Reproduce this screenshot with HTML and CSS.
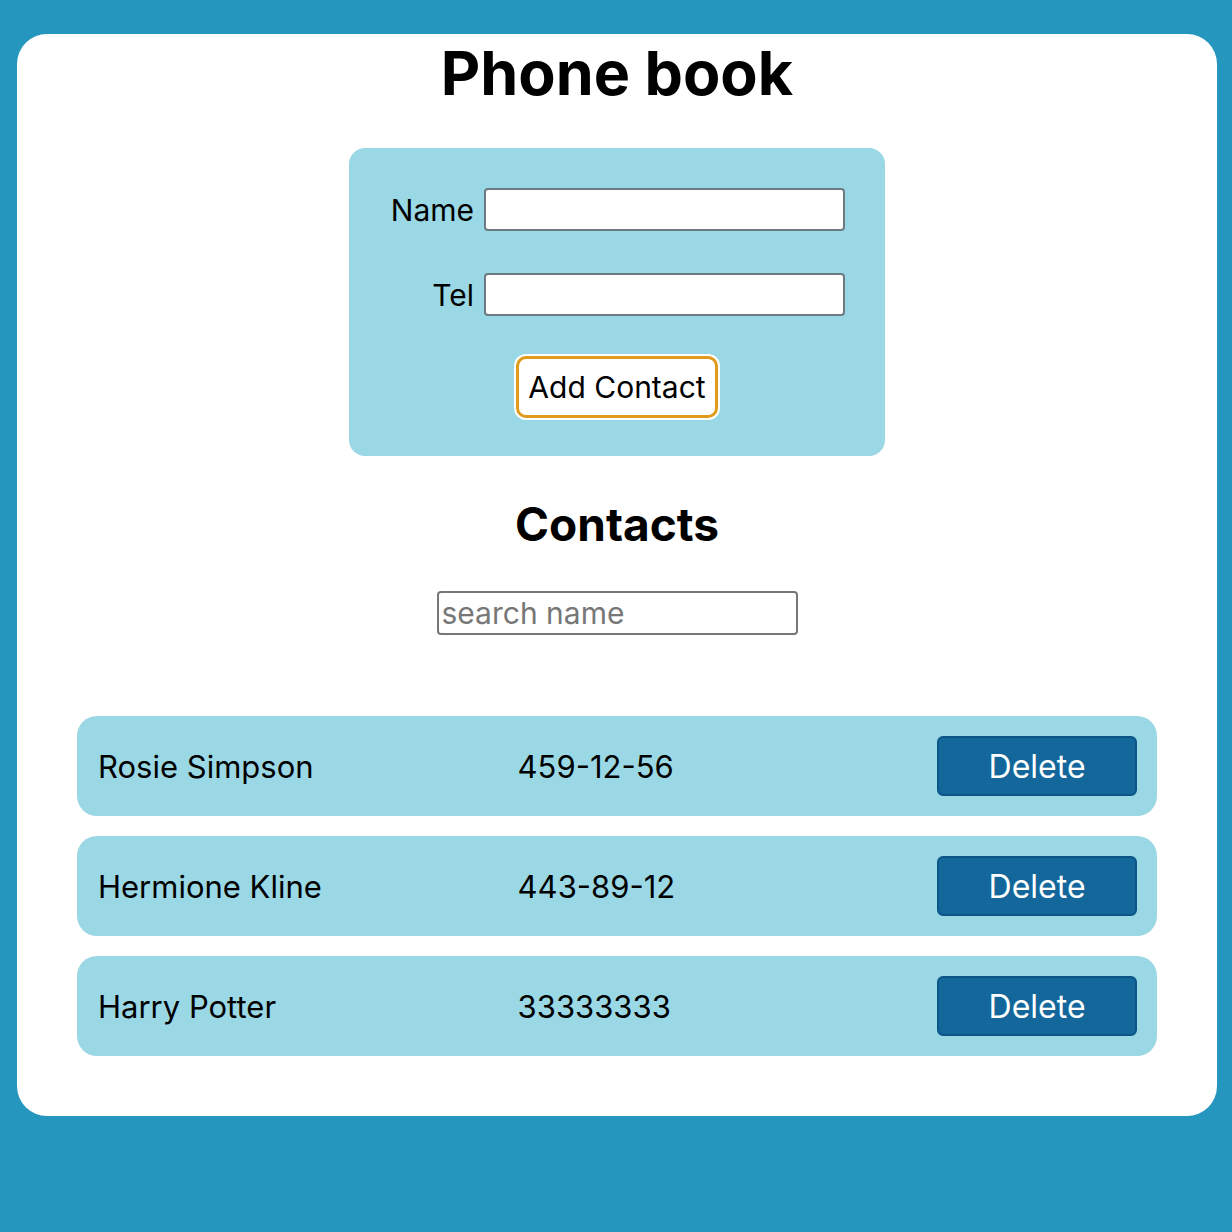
FILE: index.html
```html
<!DOCTYPE html>
<html lang="en">
<head>
<meta charset="utf-8">
<title>Phone book</title>
<link rel="stylesheet" href="styles.css">
</head>
<body>
  <main class="card">
    <h1 class="title">Phone book</h1>
    <form class="form">
      <label class="field">
        <span class="field-label">Name</span>
        <input class="field-input" type="text">
      </label>
      <label class="field">
        <span class="field-label">Tel</span>
        <input class="field-input" type="tel">
      </label>
      <button type="button" class="add-btn">Add Contact</button>
    </form>
    <h2 class="subtitle">Contacts</h2>
    <input class="search" type="text" placeholder="search name">
    <ul class="list">
      <li class="row">
        <span class="row-name">Rosie Simpson</span>
        <span class="row-tel">459-12-56</span>
        <button type="button" class="del-btn">Delete</button>
      </li>
      <li class="row">
        <span class="row-name">Hermione Kline</span>
        <span class="row-tel">443-89-12</span>
        <button type="button" class="del-btn">Delete</button>
      </li>
      <li class="row">
        <span class="row-name">Harry Potter</span>
        <span class="row-tel">33333333</span>
        <button type="button" class="del-btn">Delete</button>
      </li>
    </ul>
  </main>
</body>
</html>
```

FILE: styles.css
```css
* { box-sizing: border-box; }

html, body {
  margin: 0;
  background: #2596be;
}

body {
  padding: 34px 15px 0 17px;
  height: 1232px;
  font-family: Inter, "Noto Sans", sans-serif;
  font-size: 32px;
  color: #000;
}

.card {
  width: 1200px;
  height: 1082px;
  background: #fff;
  border-radius: 30px;
  padding: 0 60px 60px;
  display: flex;
  flex-direction: column;
  align-items: center;
}

.title {
  margin: 0;
  font-size: 61px;
  font-weight: 700;
  line-height: 78px;
}

.form {
  margin-top: 36px;
  width: 536px;
  height: 310px;
  background: #9ad8e5;
  border-radius: 16px;
  padding: 40px 40px 0 0;
  display: flex;
  flex-direction: column;
  align-items: center;
}

.field {
  display: flex;
  align-items: center;
  justify-content: flex-end;
  align-self: stretch;
  gap: 10px;
  margin-bottom: 42px;
}

.field-label {
  font-size: 30px;
}

.field-input {
  width: 361px;
  height: 43px;
  border: 2px solid #6f7a80;
  border-radius: 4px;
  background: #fff;
  font: inherit;
  padding: 2px 6px;
}

.add-btn {
  margin-left: 40px;
  margin-top: -2px;
  height: 62px;
  padding: 0 9px;
  font-family: Inter, "Noto Sans", sans-serif;
  font-size: 30px;
  color: #000;
  background: #fff;
  border: 3px solid #e09a1c;
  border-radius: 10px;
  box-shadow: 0 0 0 2px #fff;
}

.subtitle {
  margin: 40px 0 0;
  font-size: 46px;
  font-weight: 700;
  line-height: 56px;
}

.search {
  margin-top: 39px;
  width: 361px;
  height: 44px;
  border: 2px solid #777;
  border-radius: 4px;
  font-family: Inter, "Noto Sans", sans-serif;
  font-size: 30px;
  padding: 0 3px;
}

.search::placeholder {
  color: #777;
}

.list {
  list-style: none;
  margin: 81px 0 0;
  padding: 0;
  align-self: stretch;
  display: flex;
  flex-direction: column;
  gap: 20px;
}

.row {
  height: 100px;
  background: #9ad8e5;
  border-radius: 20px;
  padding: 0 20px 0 21px;
  display: flex;
  align-items: center;
  font-size: 31px;
}

.row-name,
.row-tel {
  width: 420px;
}

.del-btn {
  margin-left: auto;
  width: 200px;
  height: 60px;
  background: #13679b;
  border: 2px solid #0b5587;
  border-radius: 6px;
  color: #fff;
  font-family: Inter, "Noto Sans", sans-serif;
  font-size: 32px;
}
```
